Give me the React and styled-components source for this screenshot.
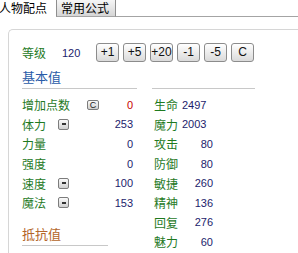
import React from "react";
import styled, { createGlobalStyle } from "styled-components";

const GlobalStyle = createGlobalStyle`
  html, body {
    margin: 0;
    padding: 0;
    background: #fff;
  }
  body {
    font-family: "Noto Sans CJK SC", "Noto Sans", sans-serif;
  }
`;

const Page = styled.div`
  width: 298px;
  height: 253px;
  overflow: hidden;
`;

const TabBar = styled.div`
  display: flex;
  height: 17px;
`;

const Tab = styled.div`
  box-sizing: border-box;
  height: 17px;
  font-size: 12px;
  line-height: 16px;
  color: #000;
  white-space: nowrap;
  ${(p) =>
    p.active
      ? `
    width: 57px;
    margin-left: -1px;
    background: #fff;
  `
      : `
    width: 60px;
    padding-left: 4px;
    border: 1px solid #8e8e8e;
    border-top: none;
    border-bottom-color: #a4a4a4;
    background: linear-gradient(#f6f6f6, #d6d6d6);
  `}
`;

const TabFill = styled.div`
  flex: 1;
  border-bottom: 1px solid #a4a4a4;
`;

const Card = styled.div`
  margin: 12px 0 0 8px;
  height: 240px;
  box-sizing: border-box;
  border: 1px solid #d6d6d6;
  border-right: none;
  border-bottom: none;
  border-radius: 5px 0 0 0;
  padding: 13px 0 0 13px;
`;

const LevelRow = styled.div`
  display: flex;
  align-items: center;
  height: 19px;
`;

const Label = styled.span`
  font-size: 12px;
  color: #1f7a1f;
  white-space: nowrap;
  min-width: ${(p) => p.w || 0}px;
`;

const Num = styled.span`
  font-family: "Liberation Sans", Arial, sans-serif;
  font-size: 11px;
  color: ${(p) => (p.red ? "#c80000" : "#1c1c6c")};
`;

const LevelValue = styled(Num)`
  min-width: 34px;
`;

const ButtonGroup = styled.div`
  display: flex;
  gap: 4px;
`;

const Button = styled.button`
  box-sizing: border-box;
  width: 23px;
  height: 19px;
  padding: 0;
  border: 1px solid #8c8c8c;
  border-radius: 3px;
  background: linear-gradient(#ffffff, #dadada);
  font-family: "Liberation Sans", Arial, sans-serif;
  font-size: 12px;
  color: #111;
  line-height: 17px;
`;

const Columns = styled.div`
  display: grid;
  grid-template-columns: 115px 103px;
  column-gap: 15px;
`;

const Column = styled.div`
  display: flex;
  flex-direction: column;
`;

const Header = styled.div`
  box-sizing: border-box;
  height: 26px;
  margin-top: ${(p) => p.mt || 0}px;
  width: ${(p) => (p.w ? `${p.w}px` : "auto")};
  padding-top: 5px;
  border-bottom: 1px solid #c8c8c8;
  font-size: 13px;
  line-height: 17px;
  color: ${(p) => p.color};
`;

const Rows = styled.div`
  padding-top: 6px;
`;

const Row = styled.div`
  display: flex;
  align-items: center;
  height: 19.6px;
  padding-left: ${(p) => p.pl || 0}px;
`;

const Mini = styled.span`
  box-sizing: border-box;
  display: inline-flex;
  align-items: center;
  justify-content: center;
  margin-left: ${(p) => p.ml}px;
  width: ${(p) => (p.wide ? 12 : 11)}px;
  height: ${(p) => (p.wide ? 10 : 11)}px;
  border: 1px solid #7c7c7c;
  border-radius: 2px;
  background: linear-gradient(#fafafa, #cfcfcf);
  font-family: "Liberation Sans", Arial, sans-serif;
  font-size: 9px;
  line-height: 8px;
  color: #222;
`;

const Dash = styled.span`
  width: 4px;
  height: 2px;
  background: #333;
`;

const LeftValue = styled(Num)`
  flex: 1;
  text-align: right;
  padding-right: 4px;
`;

const RightValue = styled(Num)`
  width: 31px;
  text-align: ${(p) => (p.left ? "left" : "right")};
`;

const basic = [
  { label: "增加点数", value: 0, mini: "C", gap: 17, red: true },
  { label: "体力", value: 253, mini: "-", gap: 12 },
  { label: "力量", value: 0 },
  { label: "强度", value: 0 },
  { label: "速度", value: 100, mini: "-", gap: 12 },
  { label: "魔法", value: 153, mini: "-", gap: 12 },
];

const derived = [
  { label: "生命", value: 2497, left: true },
  { label: "魔力", value: 2003, left: true },
  { label: "攻击", value: 80 },
  { label: "防御", value: 80 },
  { label: "敏捷", value: 260 },
  { label: "精神", value: 136 },
  { label: "回复", value: 276 },
  { label: "魅力", value: 60 },
];

export default function App() {
  return (
    <Page>
      <GlobalStyle />
      <TabBar>
        <Tab active>人物配点</Tab>
        <Tab>常用公式</Tab>
        <TabFill />
      </TabBar>
      <Card>
        <LevelRow>
          <Label w={40}>等级</Label>
          <LevelValue>120</LevelValue>
          <ButtonGroup>
            {["+1", "+5", "+20", "-1", "-5", "C"].map((b) => (
              <Button key={b}>{b}</Button>
            ))}
          </ButtonGroup>
        </LevelRow>
        <Columns>
          <Column>
            <Header mt={1} color="#2a5ca8">基本值</Header>
            <Rows>
              {basic.map((r) => (
                <Row key={r.label}>
                  <Label>{r.label}</Label>
                  {r.mini === "C" && (
                    <Mini wide ml={r.gap}>C</Mini>
                  )}
                  {r.mini === "-" && (
                    <Mini ml={r.gap}>
                      <Dash />
                    </Mini>
                  )}
                  <LeftValue red={r.red}>{r.value}</LeftValue>
                </Row>
              ))}
            </Rows>
            <Header mt={7} w={86} color="#b4662a">抵抗值</Header>
            <Rows>
              <Row>
                <Label>地抗</Label>
                <LeftValue>0</LeftValue>
              </Row>
            </Rows>
          </Column>
          <Column>
            <Header mt={1} color="#2a5ca8" />
            <Rows>
              {derived.map((r) => (
                <Row key={r.label} pl={2}>
                  <Label w={28}>{r.label}</Label>
                  <RightValue left={r.left}>{r.value}</RightValue>
                </Row>
              ))}
            </Rows>
          </Column>
        </Columns>
      </Card>
    </Page>
  );
}
